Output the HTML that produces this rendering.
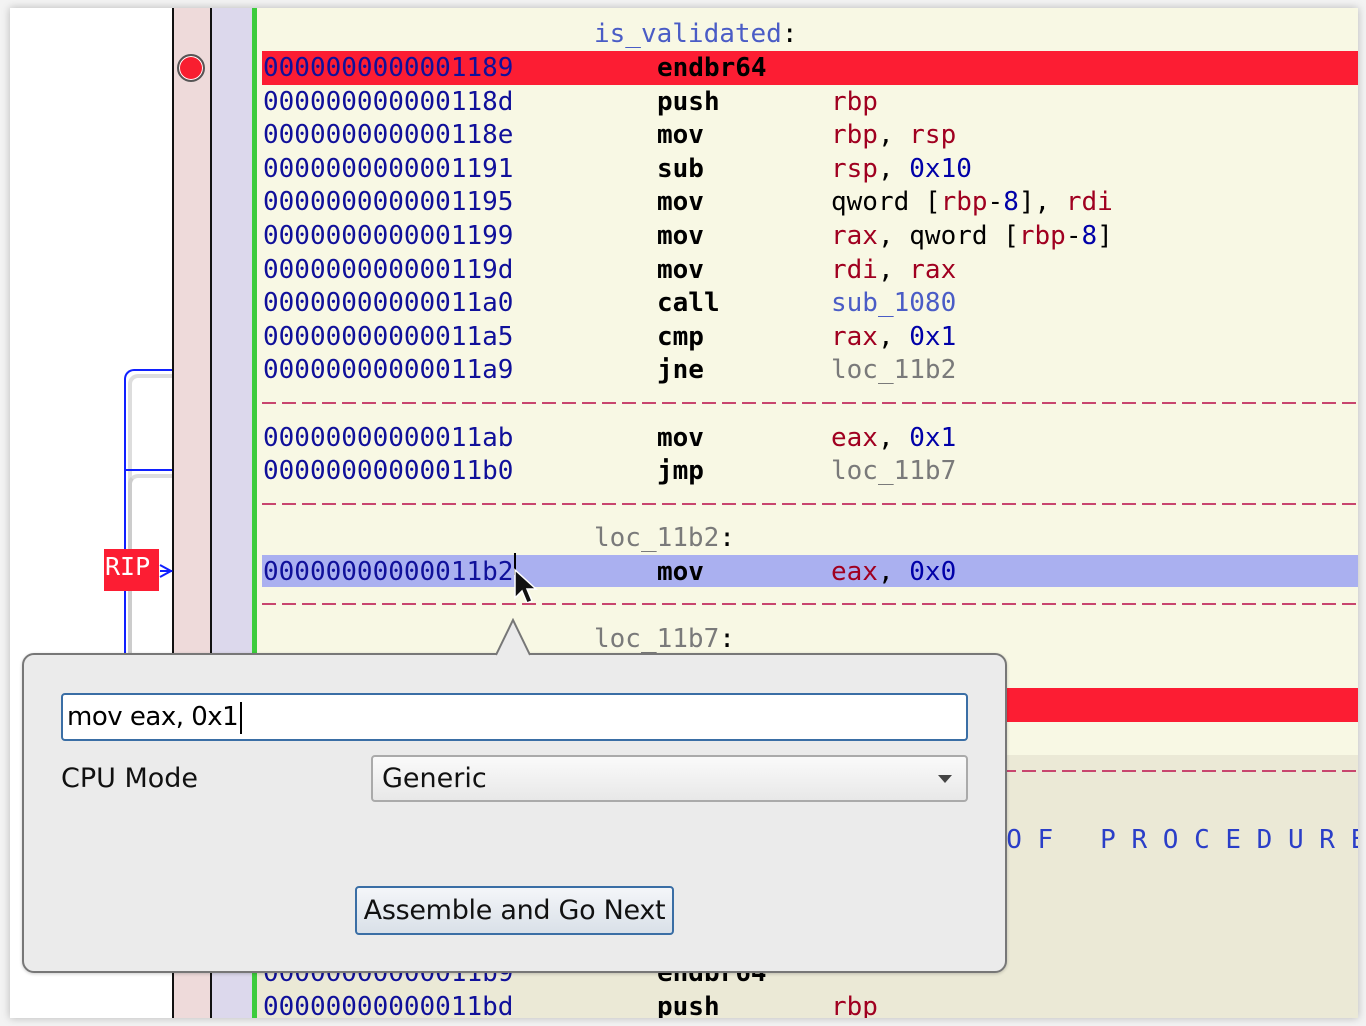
<!DOCTYPE html>
<html><head><meta charset="utf-8"><style>
*{margin:0;padding:0;box-sizing:border-box}
body{width:1366px;height:1026px;background:#f3f3f3;position:relative;overflow:hidden;font-family:"DejaVu Sans Mono","Liberation Mono",monospace}
#win{position:absolute;left:10px;top:8px;width:1348px;height:1010px;background:#fff;box-shadow:0 0 8px rgba(0,0,0,.25);overflow:hidden}
.abs{position:absolute}
.row{position:absolute;left:247px;height:34px;line-height:34px;font-size:26px;white-space:pre;width:1101px}
.a{position:absolute;left:6px;color:#10109a}
.m{position:absolute;left:400px;color:#000;font-weight:bold}
.o{position:absolute;left:574px;color:#000}
.r{color:#a00020}.n{color:#0000a8}.s{color:#4a5cc6}.l{color:#7a7a7a}
.lab{position:absolute;left:584px;height:34px;line-height:34px;font-size:26px;white-space:pre}
.dash{position:absolute;left:252px;width:1096px;height:2px;background:repeating-linear-gradient(90deg,#c8466e 0 14px,transparent 14px 20px)}
.ui{font-family:"DejaVu Sans","Liberation Sans",sans-serif}
</style></head><body>
<div id="win">
  <div class="abs" style="left:162px;top:0;width:2px;height:1010px;background:#111"></div>
  <div class="abs" style="left:164px;top:0;width:37px;height:1010px;background:#eedada"></div>
  <div class="abs" style="left:200px;top:0;width:2px;height:1010px;background:#111"></div>
  <div class="abs" style="left:202px;top:0;width:40px;height:1010px;background:#dcd8ec"></div>
  <div class="abs" style="left:242px;top:0;width:5px;height:1010px;background:#3ccc3c"></div>
  <div class="abs" style="left:247px;top:0;width:1101px;height:747px;background:#f8f8e4"></div>
  <div class="abs" style="left:247px;top:747px;width:1101px;height:263px;background:#ebe9d6"></div>
  <div class="abs" style="left:167px;top:46px;width:28px;height:28px;border-radius:50%;border:2px solid #555;background:#f81e30;box-shadow:inset 0 0 0 1px #fff"></div>
  <div class="abs" style="left:118px;top:366px;width:44px;height:300px;border-left:4px solid #ddd;border-top:4px solid #ddd;border-radius:10px 0 0 0"></div>
  <div class="abs" style="left:118px;top:466px;width:44px;height:200px;border-left:4px solid #ccc;border-top:4px solid #ddd;border-radius:10px 0 0 0"></div>
  <div class="abs" style="left:114px;top:361px;width:48px;height:300px;border-left:2px solid #1020ff;border-top:2px solid #1020ff;border-radius:10px 0 0 0"></div>
  <div class="abs" style="left:114px;top:461px;width:48px;height:2px;background:#1020ff"></div>
  <svg class="abs" style="left:148px;top:553px" width="16" height="20"><path d="M2 4 L13 10 L2 16 M2 10 H14" stroke="#1020ff" stroke-width="2" fill="none"/></svg>
  <div class="abs" style="left:94px;top:541px;width:55px;height:42px;background:#fc1d33;color:#fff;font-size:25px;line-height:36px;padding-left:1px">RIP</div>

  <div class="lab" style="top:9px;color:#4a5cc6">is_validated<span style="color:#000">:</span></div>
  <div class="abs" style="left:252px;top:43px;width:1096px;height:34px;background:#fc1d33"></div>
  <div class="row" style="top:43px"><span class="a">0000000000001189</span><span class="m">endbr64</span></div>
  <div class="row" style="top:77px"><span class="a">000000000000118d</span><span class="m">push</span><span class="o"><span class="r">rbp</span></span></div>
  <div class="row" style="top:110px"><span class="a">000000000000118e</span><span class="m">mov</span><span class="o"><span class="r">rbp</span>, <span class="r">rsp</span></span></div>
  <div class="row" style="top:144px"><span class="a">0000000000001191</span><span class="m">sub</span><span class="o"><span class="r">rsp</span>, <span class="n">0x10</span></span></div>
  <div class="row" style="top:177px"><span class="a">0000000000001195</span><span class="m">mov</span><span class="o">qword [<span class="r">rbp</span>-<span class="n">8</span>], <span class="r">rdi</span></span></div>
  <div class="row" style="top:211px"><span class="a">0000000000001199</span><span class="m">mov</span><span class="o"><span class="r">rax</span>, qword [<span class="r">rbp</span>-<span class="n">8</span>]</span></div>
  <div class="row" style="top:245px"><span class="a">000000000000119d</span><span class="m">mov</span><span class="o"><span class="r">rdi</span>, <span class="r">rax</span></span></div>
  <div class="row" style="top:278px"><span class="a">00000000000011a0</span><span class="m">call</span><span class="o"><span class="s">sub_1080</span></span></div>
  <div class="row" style="top:312px"><span class="a">00000000000011a5</span><span class="m">cmp</span><span class="o"><span class="r">rax</span>, <span class="n">0x1</span></span></div>
  <div class="row" style="top:345px"><span class="a">00000000000011a9</span><span class="m">jne</span><span class="o"><span class="l">loc_11b2</span></span></div>
  <div class="dash" style="top:394px"></div>
  <div class="row" style="top:413px"><span class="a">00000000000011ab</span><span class="m">mov</span><span class="o"><span class="r">eax</span>, <span class="n">0x1</span></span></div>
  <div class="row" style="top:446px"><span class="a">00000000000011b0</span><span class="m">jmp</span><span class="o"><span class="l">loc_11b7</span></span></div>
  <div class="dash" style="top:495px"></div>
  <div class="lab" style="top:513px;color:#7a7a7a">loc_11b2<span style="color:#000">:</span></div>
  <div class="abs" style="left:252px;top:547px;width:1096px;height:32px;background:#aab0f0"></div>
  <div class="row" style="top:547px"><span class="a">00000000000011b2</span><span class="m">mov</span><span class="o"><span class="r">eax</span>, <span class="n">0x0</span></span></div>
  <div class="abs" style="left:504px;top:545px;width:2px;height:22px;background:#000"></div>
  <svg class="abs" style="left:503px;top:560px" width="26" height="40"><path d="M2 2 L2 30 L9 23 L14 35 L19 33 L14 21 L23 21 Z" fill="#111" stroke="#fff" stroke-width="1.5"/></svg>
  <div class="dash" style="top:595px"></div>
  <div class="lab" style="top:614px;color:#7a7a7a">loc_11b7<span style="color:#000">:</span></div>
  <div class="abs" style="left:252px;top:680px;width:1096px;height:34px;background:#fc1d33"></div>
  <div class="dash" style="top:762px"></div>
  <div class="row" style="top:815px;left:871px;color:#2a3ec8;width:600px"><span style="position:absolute;left:0">E N D   O F   P R O C E D U R E</span></div>
  <div class="row" style="top:948px"><span class="a">00000000000011b9</span><span class="m">endbr64</span></div>
  <div class="row" style="top:982px"><span class="a">00000000000011bd</span><span class="m">push</span><span class="o"><span class="r">rbp</span></span></div>

  <div class="abs ui" style="left:12px;top:645px;width:985px;height:320px;background:#ebebeb;border:2px solid #777;border-radius:12px;box-shadow:0 1px 3px rgba(0,0,0,.2)"></div>
  <svg class="abs" style="left:486px;top:610px" width="36" height="38"><path d="M0 37 L17 2 L34 37" fill="#ebebeb" stroke="#777" stroke-width="2"/><rect x="2" y="35" width="30" height="4" fill="#ebebeb"/></svg>
  <div class="abs ui" style="left:51px;top:685px;width:907px;height:48px;background:#fff;border:2px solid #3a6ea5;border-radius:4px;font-size:26px;line-height:44px;padding-left:4px;color:#000;letter-spacing:-0.5px">mov eax, 0x1<span style="display:inline-block;width:2px;height:32px;background:#000;vertical-align:middle;margin-left:2px"></span></div>
  <div class="abs ui" style="left:51px;top:753px;font-size:27px;line-height:36px;color:#111">CPU Mode</div>
  <div class="abs ui" style="left:361px;top:747px;width:597px;height:47px;background:linear-gradient(#fafafa,#e8e8e8);border:2px solid #aaa;border-radius:4px;font-size:27px;line-height:43px;padding-left:9px;color:#111">Generic
    <div class="abs" style="right:14px;top:18px;width:0;height:0;border-left:7px solid transparent;border-right:7px solid transparent;border-top:8px solid #444"></div></div>
  <div class="abs ui" style="left:345px;top:878px;width:319px;height:49px;background:linear-gradient(#f4f6f9,#d9e0e8);border:2px solid #3a6ea5;border-radius:4px;font-size:27px;line-height:45px;text-align:center;color:#111;letter-spacing:-0.3px">Assemble and Go Next</div>
</div>
</body></html>
